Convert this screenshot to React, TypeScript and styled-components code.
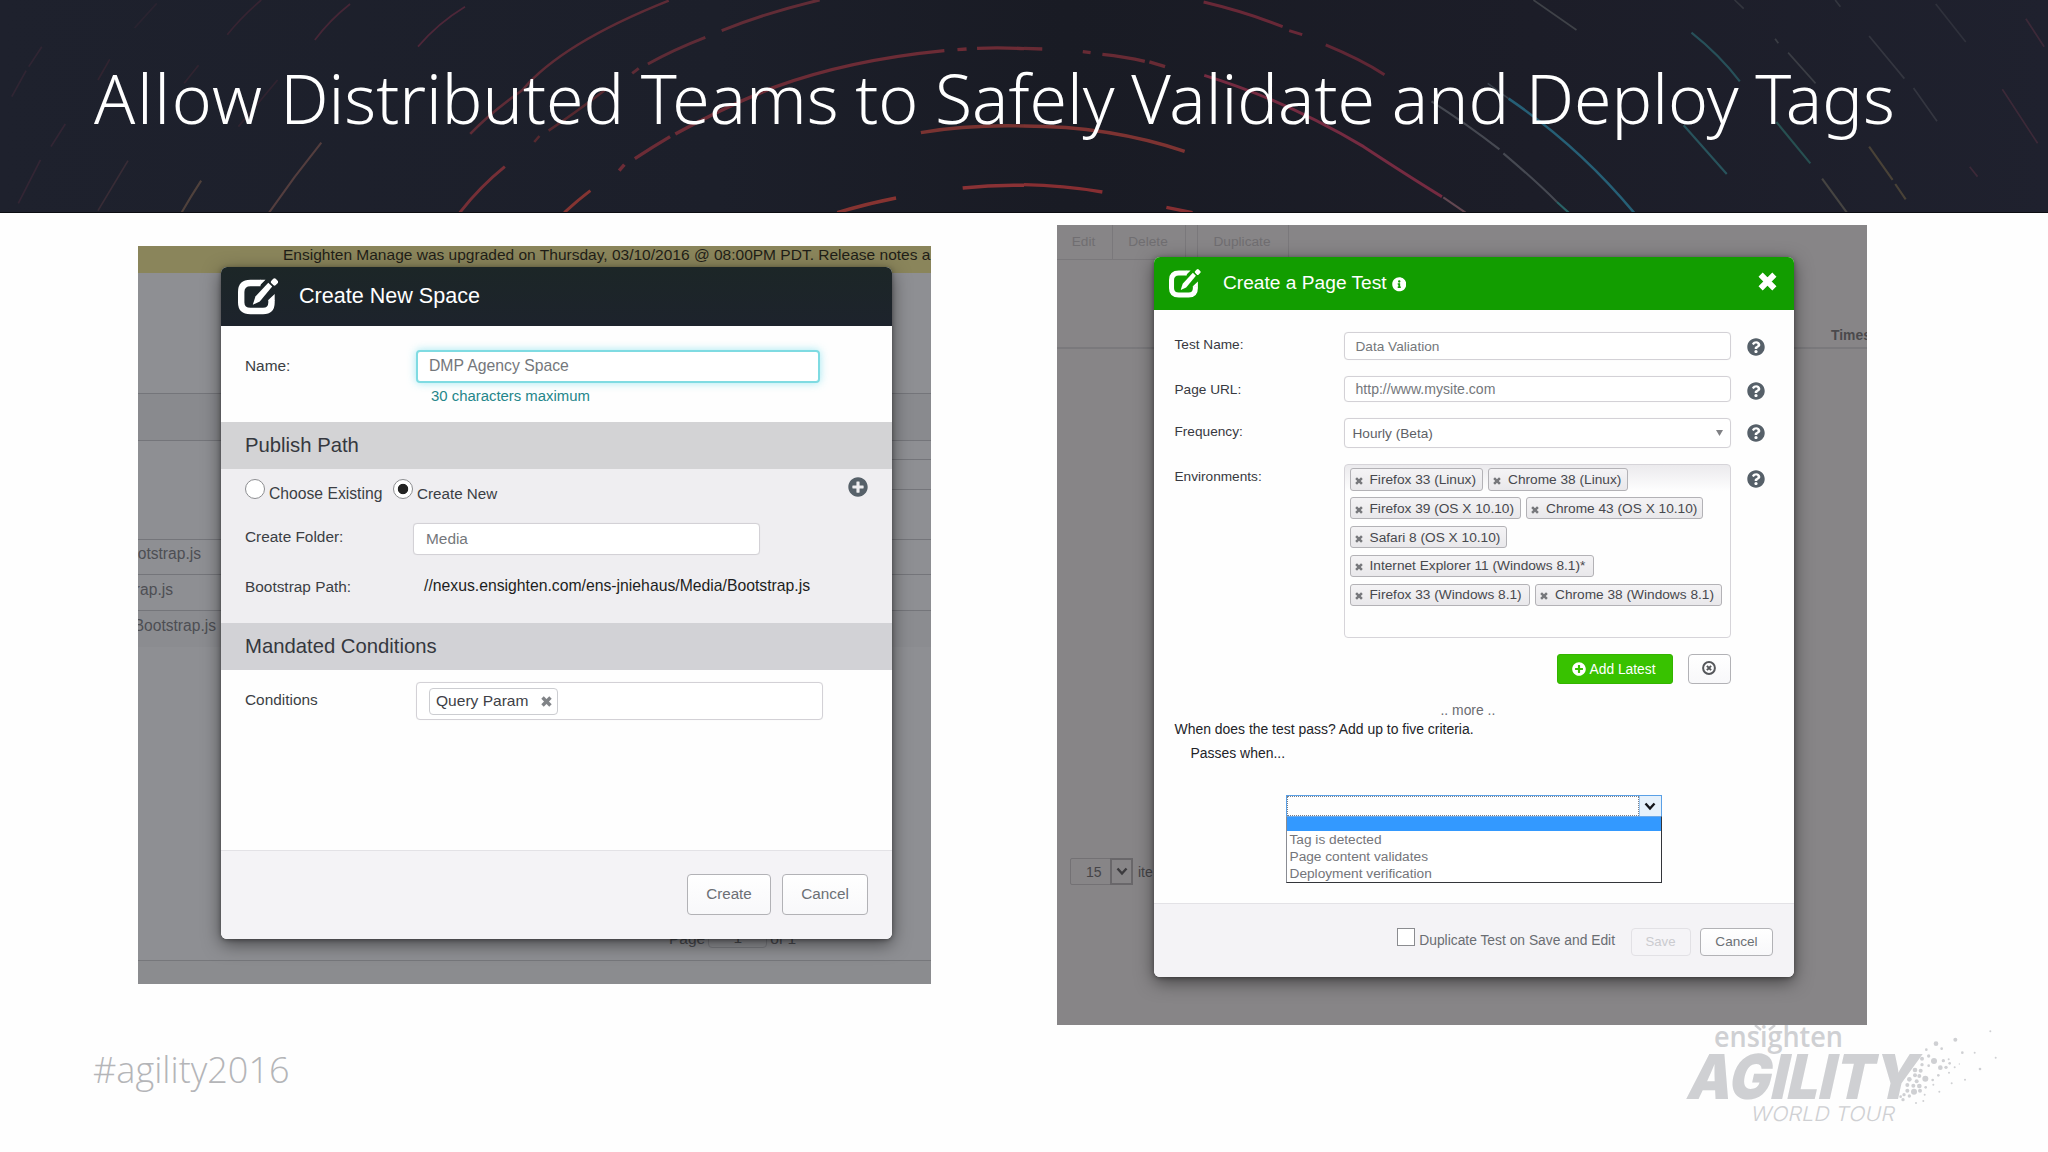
import React from 'react';
import styled, { createGlobalStyle } from 'styled-components';
import { FaPlusCircle, FaQuestionCircle, FaInfoCircle } from 'react-icons/fa';

const GlobalStyle = createGlobalStyle`
  * { box-sizing: border-box; }
  body { margin: 0; background: #fefefe; }
`;

/* ---------- slide ---------- */

const Slide = styled.div`
  width: 2048px;
  height: 1152px;
  display: flex;
  flex-direction: column;
  overflow: hidden;
  background: #fefefe;
  font-family: 'Liberation Sans', Arial, sans-serif;
`;

const Banner = styled.header`
  position: relative;
  flex: none;
  height: 213px;
  padding: 50px 0 0 94px;
  background: linear-gradient(90deg, #1e212d 0%, #1c1f2a 35%, #191b24 52%, #1c1d28 75%, #1f212e 100%);
  border-bottom: 1px solid #0c0d12;
`;

const Trails = styled.svg`
  position: absolute;
  inset: 0;
  width: 2048px;
  height: 212px;
  fill: none;
`;

const Title = styled.h1`
  position: relative;
  margin: 0;
  font: 300 67.9px/96px 'Noto Sans', sans-serif;
  word-spacing: -1px;
  color: #fff;
  white-space: nowrap;
`;

const Loose = styled.span`
  letter-spacing: 1.6px;
`;

const Stage = styled.main`
  flex: none;
  height: 812px;
  display: flex;
  align-items: flex-start;
  padding-left: 138px;
  gap: 126px;
`;

const SlideFooter = styled.footer`
  flex: 1;
  display: flex;
  justify-content: space-between;
  padding: 0 48px 0 93px;
`;

const Hashtag = styled.div`
  margin-top: 19px;
  font: 300 36.1px/50px 'Open Sans', sans-serif;
  color: #b4b5b8;
`;

/* ---------- captured windows ---------- */

const Shot = styled.section<{ $w: number; $h: number; $top: number; $bg: string }>`
  position: relative;
  flex: none;
  display: flex;
  flex-direction: column;
  width: ${p => p.$w}px;
  height: ${p => p.$h}px;
  margin-top: ${p => p.$top}px;
  background: ${p => p.$bg};
  overflow: hidden;
`;

const Notice = styled.div`
  flex: none;
  height: 27px;
  padding-left: 145px;
  background: #8a855b;
  color: #1f1e17;
  font-size: 15.53px;
  line-height: 17px;
  white-space: nowrap;
`;

const Strip = styled.div<{ $h: number; $bg?: string; $inset?: number; $plain?: boolean }>`
  flex: none;
  display: flex;
  align-items: center;
  height: ${p => p.$h}px;
  margin-left: ${p => p.$inset || 0}px;
  background: ${p => p.$bg || 'transparent'};
  border-bottom: ${p => (p.$plain ? 'none' : '1px solid #74757a')};
`;

const ScriptName = styled.span<{ $w: number }>`
  display: flex;
  justify-content: flex-end;
  width: ${p => p.$w}px;
  padding-bottom: 6px;
  font-size: 15.6px;
  color: #4d4e53;
`;

const Pager = styled.div`
  flex: none;
  display: flex;
  align-items: flex-end;
  height: 30px;
  padding: 0 0 12px 531px;
  gap: 3px;
  border-bottom: 1px solid #76777b;
  font-size: 15.5px;
  line-height: 18px;
  color: #4a4b50;
`;

const PagerBox = styled.span`
  width: 59px;
  height: 27px;
  padding-top: 7px;
  border: 1px solid #7a7b80;
  border-radius: 4px;
  text-align: center;
`;

const Fill = styled.div`
  flex: 1;
`;

const Toolbar = styled.div`
  flex: none;
  display: flex;
  height: 35px;
`;

const Tool = styled.span<{ $w: number }>`
  width: ${p => p.$w}px;
  height: 35px;
  padding-right: 2px;
  border-right: 1px solid #7a787b;
  border-bottom: 1px solid #7a787b;
  text-align: center;
  font-size: 13.7px;
  line-height: 34px;
  color: #706e71;
`;

const ListHead = styled.div`
  flex: none;
  display: flex;
  justify-content: flex-end;
  height: 89px;
  padding-top: 66px;
  border-bottom: 2px solid #7a797c;
`;

const ListHeadCell = styled.span`
  width: 36px;
  font: bold 13.9px/18px 'Liberation Sans', Arial, sans-serif;
  color: #4a494c;
`;

const PageSize = styled.div`
  flex: none;
  display: flex;
  align-items: center;
  height: 27px;
  margin: 509px 0 0 13px;
  font-size: 14px;
  color: #454447;
`;

const PageSizeBox = styled.span`
  display: flex;
  width: 63px;
  height: 27px;
  margin-right: 5px;
  border: 1px solid #737174;
  border-radius: 2px;
`;

const PageSizeValue = styled.span`
  flex: 1;
  padding-left: 15px;
  line-height: 26px;
`;

const PageSizeArrow = styled.span`
  display: flex;
  align-items: center;
  justify-content: center;
  width: 23px;
  margin: -1px;
  border: 2px solid #69676a;
`;

/* ---------- dialogs ---------- */

const Dialog = styled.div<{ $x: number; $y: number; $w: number; $h: number }>`
  position: absolute;
  left: ${p => p.$x}px;
  top: ${p => p.$y}px;
  width: ${p => p.$w}px;
  height: ${p => p.$h}px;
  display: flex;
  flex-direction: column;
  border-radius: 6px;
  background: #fefefe;
  overflow: hidden;
`;

const DialogShadow = styled.div<{ $x: number; $y: number; $w: number; $h: number }>`
  position: absolute;
  left: ${p => p.$x}px;
  top: ${p => p.$y}px;
  width: ${p => p.$w}px;
  height: ${p => p.$h}px;
  border-radius: 6px;
  box-shadow: 0 5px 18px rgba(0, 0, 0, 0.5), 0 1px 4px rgba(0, 0, 0, 0.35);
`;

const DialogHead = styled.div<{ $h: number; $bg: string; $size: number }>`
  flex: none;
  display: flex;
  align-items: center;
  height: ${p => p.$h}px;
  background: ${p => p.$bg};
  color: #fff;
  font-size: ${p => p.$size}px;
  svg { flex: none; }
`;

const DialogTitle = styled.span<{ $gap: number }>`
  margin-left: ${p => p.$gap}px;
  white-space: nowrap;
`;

const Block = styled.div<{ $h: number; $top?: number; $bg?: string }>`
  flex: none;
  height: ${p => p.$h}px;
  padding: ${p => p.$top || 0}px 24px 0 24px;
  background: ${p => p.$bg || 'transparent'};
  color: #3b3e44;
  font-size: 15.4px;
`;

const SectionBar = styled.div<{ $bg: string }>`
  flex: none;
  height: 47px;
  padding-left: 24px;
  background: ${p => p.$bg};
  font-size: 20.3px;
  line-height: 47px;
  color: #35383e;
`;

const Row = styled.div<{ $h: number; $mt?: number }>`
  display: flex;
  align-items: center;
  height: ${p => p.$h}px;
  margin-top: ${p => p.$mt || 0}px;
  white-space: nowrap;
`;

const Label = styled.label<{ $w: number; $lift?: number }>`
  flex: none;
  width: ${p => p.$w}px;
  padding-bottom: ${p => p.$lift || 0}px;
`;

const Field = styled.div<{ $w: number; $h: number; $pad?: number; $focus?: boolean; $color?: string; $size?: number }>`
  flex: none;
  display: flex;
  align-items: center;
  justify-content: space-between;
  width: ${p => p.$w}px;
  height: ${p => p.$h}px;
  padding: 0 ${p => p.$pad ?? 11}px;
  border: ${p => (p.$focus ? '2px solid #7fdbe2' : '1px solid #d3d1d6')};
  border-radius: 4px;
  background: #fff;
  color: ${p => p.$color || '#74777b'};
  font-size: ${p => (p.$size ? `${p.$size}px` : 'inherit')};
  box-shadow: ${p => (p.$focus ? '0 0 9px rgba(110, 220, 235, 0.65)' : '0 0 1px rgba(0,0,0,.08)')};
`;

const Hint = styled.div`
  padding-left: 186px;
  font-size: 14.9px;
  line-height: 26px;
  color: #24868a;
`;

const RadioRow = styled.div`
  display: flex;
  align-items: flex-start;
  height: 54px;
  padding-top: 10px;
  white-space: nowrap;
  svg { margin: -2px 0 0 auto; }
`;

const Radio = styled.span<{ $on?: boolean }>`
  flex: none;
  width: 20px;
  height: 20px;
  border: 1.5px solid #8c8d90;
  border-radius: 50%;
  background: ${p => (p.$on ? 'radial-gradient(circle, #222 0 4.8px, #fff 5.6px)' : '#fff')};
`;

const RadioText = styled.span<{ $w: number; $size: number }>`
  width: ${p => p.$w}px;
  padding: 4px 0 0 4px;
  line-height: 21px;
  font-size: ${p => p.$size}px;
`;

const PathText = styled.span`
  padding: 0 0 3px 8px;
  font-size: 15.75px;
  color: #1d1e21;
`;

const Chip = styled.span`
  display: flex;
  align-items: center;
  justify-content: space-between;
  width: 129px;
  height: 27px;
  padding: 0 5px 0 6px;
  border: 1.5px solid #cccdd1;
  border-radius: 4px;
  font-size: 15.56px;
  color: #3d4046;
`;

const DialogFoot = styled.div<{ $pad: string; $gap: number }>`
  flex: 1;
  display: flex;
  justify-content: flex-end;
  align-items: flex-start;
  gap: ${p => p.$gap}px;
  padding: ${p => p.$pad};
  border-top: 1px solid #e3e2e6;
  background: #f4f3f6;
`;

const Button = styled.button<{ $w: number; $h: number; $size: number; $off?: boolean }>`
  display: flex;
  align-items: center;
  justify-content: center;
  width: ${p => p.$w}px;
  height: ${p => p.$h}px;
  padding: 0 0 2px;
  border: 1.5px solid ${p => (p.$off ? '#e2e1e5' : '#b2b2b6')};
  border-radius: 4px;
  background: ${p => (p.$off ? '#f5f4f7' : 'linear-gradient(#fff, #f8f8fa)')};
  color: ${p => (p.$off ? '#cbcbcf' : '#6c7075')};
  font: ${p => p.$size}px 'Liberation Sans', Arial, sans-serif;
`;

/* ---------- page test dialog ---------- */

const TestForm = styled.div`
  flex: none;
  height: 593px;
  padding: 22px 0 0 21px;
  font-size: 13.65px;
  color: #38393f;
`;

const Help = styled(FaQuestionCircle)<{ $y?: number }>`
  flex: none;
  width: 18px;
  height: 18px;
  margin-left: 16px;
  margin-top: ${p => p.$y || 0}px;
  color: #566069;
`;

const Environments = styled.div`
  display: flex;
  align-items: flex-start;
  height: 174px;
  margin-top: 16px;
`;

const EnvLabel = styled.label`
  flex: none;
  width: 169px;
  padding-top: 5px;
`;

const EnvBox = styled.div`
  display: flex;
  flex-wrap: wrap;
  align-content: flex-start;
  gap: 6.4px 5.5px;
  width: 387px;
  height: 174px;
  padding: 3px 0 0 5px;
  border: 1px solid #d6d4d9;
  border-radius: 4px;
  background: linear-gradient(#ebeaed 0, #fefefe 26px);
`;

const Tag = styled.span<{ $w: number }>`
  display: flex;
  align-items: center;
  width: ${p => p.$w}px;
  height: 22.5px;
  padding-left: 4px;
  border: 1.5px solid #b3b2b6;
  border-radius: 3px;
  background: linear-gradient(#f4f3f5, #e9e8eb);
  color: #47484d;
  font-size: 13.7px;
  white-space: nowrap;
  svg { flex: none; margin: 3px 7px 0 0; }
`;

const Actions = styled.div`
  display: flex;
  justify-content: flex-end;
  gap: 15px;
  width: 556px;
  height: 30px;
  margin-top: 16px;
`;

const AddButton = styled.button`
  display: flex;
  align-items: center;
  justify-content: center;
  gap: 4px;
  width: 116px;
  height: 30px;
  padding: 0 2px 0 0;
  border: 1px solid #34b400;
  border-radius: 3px;
  background: #38c200;
  color: #fff;
  font: 13.8px 'Liberation Sans', Arial, sans-serif;
`;

const More = styled.div`
  margin-top: 17px;
  padding-left: 266px;
  font-size: 13.9px;
  line-height: 19px;
  color: #6b6c71;
`;

const Question = styled.div<{ $indent?: number; $mt?: number }>`
  margin-top: ${p => p.$mt || 0}px;
  padding-left: ${p => p.$indent || 0}px;
  font-size: 13.95px;
  line-height: 19px;
  color: #222328;
`;

const Criteria = styled.div`
  width: 376px;
  margin: 32px 0 0 111px;
`;

const Combo = styled.div`
  display: flex;
  height: 21px;
  border: 1.5px solid #5aa0e6;
  border-bottom: none;
`;

const ComboText = styled.div`
  flex: 1;
  border: 1px dotted #7c7f86;
  background: #fefefe;
`;

const ComboArrow = styled.div`
  display: flex;
  align-items: center;
  justify-content: center;
  width: 22px;
  border-left: 1px solid #9cc6ef;
  background: #e6f1fb;
`;

const Options = styled.div`
  height: 67px;
  border: 1.5px solid #33353a;
  border-top-color: #6aa9ea;
  border-left-color: #8a8c93;
  background: #fff;
  font-size: 13.7px;
  line-height: 17px;
  color: #74757a;
`;

const Option = styled.div<{ $active?: boolean }>`
  height: ${p => (p.$active ? 14 : 17)}px;
  padding-left: 3px;
  background: ${p => (p.$active ? '#3399ff' : 'transparent')};
`;

const CheckLabel = styled.label`
  display: flex;
  align-items: flex-start;
  gap: 4px;
  margin-right: 6px;
  font-size: 13.83px;
  line-height: 25px;
  color: #6a6d72;
`;

const CheckBox = styled.span`
  width: 18px;
  height: 18px;
  border: 1.5px solid #8b8c90;
  background: #fff;
`;

/* ---------- drawings ---------- */

const Icon = styled.svg<{ $m?: string }>`
  flex: none;
  margin: ${p => p.$m || 0};
`;

function ComposeIcon({ width, left }: { width: number; left: number }) {
  return (
    <Icon width={width} height={(width * 37) / 40} viewBox="0 0 40 37" $m={`0 0 0 ${left}px`}>
      <path
        d="M22.5 5H12.5Q3.2 5 3.2 14V24.5Q3.2 33 12.5 33H25Q33.5 33 33.5 24.5V22"
        fill="none"
        stroke="#fff"
        strokeWidth="6.4"
      />
      <path d="M22 1.8H27.5L21 8.2ZM30.3 22.6V22L36.7 16V22.6Z" fill="#fff" />
      <path d="M14.8 26.8L17.4 18.6L30.3 4.8L34.2 8.6L21.8 23.6Z" fill="#fff" />
      <rect x="33.4" y="0.8" width="6.2" height="6.2" rx="1.8" transform="rotate(45 36.5 3.9)" fill="#fff" />
    </Icon>
  );
}

function CrossIcon({ size, color, margin }: { size: number; color: string; margin?: string }) {
  return (
    <Icon width={size} height={size} viewBox="0 0 16 16" $m={margin}>
      <path d="M2.2 2.2L13.8 13.8M13.8 2.2L2.2 13.8" stroke={color} strokeWidth="5" fill="none" />
    </Icon>
  );
}

const RingCross = () => (
  <Icon width="14" height="14" viewBox="0 0 14 14" fill="none" stroke="#55575b">
    <circle cx="7" cy="7" r="5.9" strokeWidth="2" />
    <path d="M4.9 4.9L9.1 9.1M9.1 4.9L4.9 9.1" strokeWidth="2" />
  </Icon>
);

const Chevron = ({ color }: { color: string }) => (
  <svg width="12" height="9" viewBox="0 0 12 9">
    <path d="M1.5 1.5L6 6.5L10.5 1.5" fill="none" stroke={color} strokeWidth="2.4" />
  </svg>
);

type Trail = [string, string, number, number];

const leftTrails: Trail[] = [
  ['M1024 2Q860 130 800 270Q750 340 720 402', '#74303a', 3, 0.85],
  ['M1255 0Q1170 40 1105 92', '#74303a', 3.5, 0.9],
  ['M1080 112Q1030 150 992 192M978 205L968 220', '#74303a', 3.5, 0.85],
  ['M930 265Q880 340 840 392M826 408L818 426', '#7a2f33', 3, 0.7],
  ['M1446 152Q1300 180 1185 262Q1110 320 1034 402M1026 410Q1000 440 972 476M956 494L948 512', '#82303a', 4, 0.9],
  ['M1466 149L1480 147M1496 145Q1532 142 1568 146', '#82303a', 4, 0.9],
  ['M904 572Q885 600 864 638', '#a03a34', 3.5, 0.9],
  ['M773 500Q735 560 704 638', '#93343a', 3.5, 0.85],
  ['M1410 398Q1480 374 1568 378', '#933a35', 4, 0.9],
  ['M1474 564Q1520 554 1568 556', '#a8383a', 4, 0.9],
  ['M1372 594Q1325 612 1282 638', '#a33a34', 4, 0.9],
  ['M712 20Q670 70 640 140', '#6d2c42', 2, 0.7],
  ['M536 12Q505 60 482 120', '#6a2c40', 2, 0.6],
  ['M400 0Q370 50 348 104', '#5c2a3c', 2, 0.45],
  ['M240 10L206 84', '#4c2c3c', 2, 0.3],
  ['M492 428Q450 530 412 638', '#75504a', 2.5, 0.7],
  ['M308 542Q292 590 278 638', '#755a48', 2.5, 0.65],
  ['M196 482Q172 560 150 632', '#5a3a42', 2, 0.5],
  ['M100 372L78 440M62 480L28 610', '#5a2f42', 2, 0.4],
  ['M64 140L44 200M40 212L18 290', '#5a2f42', 2, 0.35],
  ['M168 178L150 240M304 196L282 250M425 240L365 380', '#5c2c3a', 2, 0.35],
];

const rightTrails: Trail[] = [
  ['M275 6Q340 36 396 80M406 92L426 104', '#7d2c3c', 3.5, 0.9],
  ['M462 135Q515 178 552 224', '#7d2c3c', 3.5, 0.8],
  ['M0 145L28 147M90 155L102 158M120 163Q155 170 185 184M192 186L216 200', '#82303a', 4, 0.85],
  ['M276 226Q400 300 520 440Q590 530 640 590', '#93304a', 3.5, 0.85],
  ['M642 592L676 638', '#7a5660', 2.5, 0.85],
  ['M0 378Q130 378 246 454', '#983a36', 4, 0.9],
  ['M0 554Q60 556 120 576', '#a33436', 4, 0.9],
  ['M218 622L258 638', '#a33436', 4, 0.9],
  ['M780 0L846 90', '#55595c', 2, 0.7],
  ['M1088 0L1102 26M1242 0L1250 20', '#55595c', 2, 0.45],
  ['M624 304Q680 375 728 448', '#5c6068', 2.5, 0.75],
  ['M734 460Q785 545 816 606', '#5c6068', 2.5, 0.75],
  ['M816 606L834 638', '#2f7f80', 2.5, 0.8],
  ['M710 250L742 296', '#4a5560', 2, 0.75],
  ['M742 296Q850 440 934 638', '#2a7690', 3, 0.85],
  ['M1022 98Q1065 165 1096 244', '#2d6a72', 2.5, 0.75],
  ['M1010 376L1076 522', '#2d6a72', 2.5, 0.8],
  ['M1150 116L1155 130M1170 158L1212 250', '#55595c', 2, 0.6],
  ['M1152 366L1204 490', '#2d6a66', 2.5, 0.75],
  ['M1222 536L1260 638', '#5f5b50', 2.5, 0.7],
  ['M1294 108L1348 236M1362 264L1398 364', '#45474f', 2, 0.65],
  ['M1294 440L1330 540M1334 552L1350 598', '#6a5c40', 2.5, 0.65],
  ['M1396 12L1442 126', '#45474f', 2, 0.5],
  ['M1534 56L1562 140M1498 268L1552 430M1448 500L1460 530', '#5c3344', 2, 0.55],
];

function TrailGroup({ trails, x }: { trails: Trail[]; x: number }) {
  return (
    <g transform={`translate(${x} 0) scale(0.6531 0.3333)`}>
      {trails.map(([d, stroke, width, opacity]) => (
        <path key={d} d={d} stroke={stroke} strokeWidth={width * 0.85} opacity={opacity * 0.88} vectorEffect="non-scaling-stroke" />
      ))}
    </g>
  );
}

const dots: [number, number, number][] = [
  [991, 94, 3], [886, 119, 6], [828, 131, 7], [799, 149, 4], [845, 146, 4], [907, 158, 4], [944, 158, 3],
  [1007, 173, 3], [786, 176, 6], [806, 168, 5], [822, 183, 9], [850, 182, 5], [866, 178, 3], [869, 190, 4],
  [960, 207, 4], [786, 194, 5], [806, 197, 4], [841, 203, 7], [858, 202, 5], [884, 202, 3], [898, 192, 2],
  [765, 210, 7], [782, 212, 6], [778, 228, 6], [796, 236, 9], [818, 240, 4], [835, 226, 4], [867, 218, 3],
  [915, 239, 3], [875, 250, 3], [748, 238, 7], [765, 226, 6], [770, 244, 6], [742, 255, 6], [760, 257, 6],
  [778, 258, 7], [797, 262, 4], [820, 254, 3], [742, 272, 6], [762, 275, 9], [780, 272, 6], [838, 275, 3],
  [748, 288, 5], [732, 284, 5], [729, 299, 5], [794, 284, 3], [768, 309, 3], [790, 303, 3], [722, 290, 4],
];

function AgilityLogo() {
  return (
    <svg width="340" height="127" viewBox="1660 1025 340 127" fill="#cfd0d3">
      <text x="1714" y="1046.5" fontFamily="'Open Sans', sans-serif" fontSize="28.5" fontWeight="600" textLength="129" lengthAdjust="spacingAndGlyphs">
        ensighten
      </text>
      <path d="M1755 1025L1761 1030M1775 1025L1769 1030" stroke="#cfd0d3" strokeWidth="2.4" />
      <text transform="translate(1685 1099) skewX(-12.5)" fontFamily="Inter, sans-serif" fontSize="62" fontWeight="900" textLength="229" lengthAdjust="spacingAndGlyphs">
        AGILITY
      </text>
      <text transform="translate(1750 1120.7) skewX(-12.5)" fontFamily="Inter, sans-serif" fontSize="20.2" fontWeight="300" textLength="144" lengthAdjust="spacingAndGlyphs">
        WORLD TOUR
      </text>
      {dots.map(([x, y, r]) => (
        <circle key={`${x}-${y}`} cx={1660 + x / 3} cy={1000 + y / 3} r={r / 3} />
      ))}
    </svg>
  );
}

/* ---------- content ---------- */

const environments: [string, number][] = [
  ['Firefox 33 (Linux)', 133],
  ['Chrome 38 (Linux)', 140],
  ['Firefox 39 (OS X 10.10)', 171],
  ['Chrome 43 (OS X 10.10)', 177],
  ['Safari 8 (OS X 10.10)', 157],
  ['Internet Explorer 11 (Windows 8.1)*', 244.5],
  ['Firefox 33 (Windows 8.1)', 180],
  ['Chrome 38 (Windows 8.1)', 187],
];

function NewSpaceShot() {
  const frame = { $x: 83, $y: 20.5, $w: 671, $h: 672.5 };
  return (
    <Shot $w={793} $h={738} $top={33} $bg="#8e8f93">
      <Notice>Ensighten Manage was upgraded on Thursday, 03/10/2016 @ 08:00PM PDT. Release notes a</Notice>
      <Strip $h={121} />
      <Strip $h={47} $bg="#898a8e" />
      <Strip $h={19} $inset={300} />
      <Strip $h={30} $inset={300} />
      <Strip $h={50} />
      <Strip $h={35}><ScriptName $w={63}>otstrap.js</ScriptName></Strip>
      <Strip $h={36}><ScriptName $w={35}>rap.js</ScriptName></Strip>
      <Strip $h={36} $bg="#8b8c90" $plain><ScriptName $w={78}>Bootstrap.js</ScriptName></Strip>
      <Fill />
      <Pager>
        Page <PagerBox>1</PagerBox> of 1
      </Pager>
      <Strip $h={23} $plain $bg="#8b8c8f" />
      <DialogShadow {...frame} />
      <Dialog {...frame}>
        <DialogHead $h={59.5} $bg="linear-gradient(#1c2627, #1d232c)" $size={21.57}>
          <ComposeIcon width={40} left={17} />
          <DialogTitle $gap={21}>Create New Space</DialogTitle>
        </DialogHead>
        <Block $h={96} $top={23.5}>
          <Row $h={33}>
            <Label $w={171} $lift={1}>Name:</Label>
            <Field $w={404} $h={33} $focus $size={15.76}>DMP Agency Space</Field>
          </Row>
          <Hint>30 characters maximum</Hint>
        </Block>
        <SectionBar $bg="#d3d3d5">Publish Path</SectionBar>
        <Block $h={154} $bg="#efeef1">
          <RadioRow>
            <Radio />
            <RadioText $w={128} $size={15.7}>Choose Existing</RadioText>
            <Radio $on />
            <RadioText $w={121} $size={15.2}>Create New</RadioText>
            <FaPlusCircle size={20} color="#566069" />
          </RadioRow>
          <Row $h={32}>
            <Label $w={168} $lift={5}>Create Folder:</Label>
            <Field $w={347} $h={32} $pad={12}>Media</Field>
          </Row>
          <Row $h={30} $mt={17}>
            <Label $w={171}>Bootstrap Path:</Label>
            <PathText>//nexus.ensighten.com/ens-jniehaus/Media/Bootstrap.js</PathText>
          </Row>
        </Block>
        <SectionBar $bg="#d2d2d6">Mandated Conditions</SectionBar>
        <Block $h={180} $top={12}>
          <Row $h={38}>
            <Label $w={171} $lift={3}>Conditions</Label>
            <Field $w={407} $h={38} $pad={12}>
              <Chip>
                Query Param <CrossIcon size={11} color="#808387" />
              </Chip>
            </Field>
          </Row>
        </Block>
        <DialogFoot $pad="23px 24px 0" $gap={11}>
          <Button $w={84} $h={41} $size={15.2}>Create</Button>
          <Button $w={86} $h={41} $size={15.3}>Cancel</Button>
        </DialogFoot>
      </Dialog>
    </Shot>
  );
}

function PageTestShot() {
  const frame = { $x: 96.5, $y: 31.5, $w: 640.5, $h: 720.5 };
  return (
    <Shot $w={810} $h={800} $top={12} $bg="#878587">
      <Toolbar>
        <Tool $w={56}>Edit</Tool>
        <Tool $w={73}>Delete</Tool>
        <Tool $w={12} />
        <Tool $w={91}>Duplicate</Tool>
      </Toolbar>
      <ListHead>
        <ListHeadCell>Times</ListHeadCell>
      </ListHead>
      <PageSize>
        <PageSizeBox>
          <PageSizeValue>15</PageSizeValue>
          <PageSizeArrow><Chevron color="#3c3b3e" /></PageSizeArrow>
        </PageSizeBox>
        ite
      </PageSize>
      <DialogShadow {...frame} />
      <Dialog {...frame}>
        <DialogHead $h={53.5} $bg="#129d00" $size={19.16}>
          <ComposeIcon width={31.5} left={15.5} />
          <DialogTitle $gap={22.5}>Create a Page Test</DialogTitle>
          <FaInfoCircle size={14.5} style={{ margin: '2px 0 0 5px' }} />
          <CrossIcon size={19} color="#fff" margin="-3px 17px 0 auto" />
        </DialogHead>
        <TestForm>
          <Row $h={28}>
            <Label $w={169} $lift={3}>Test Name:</Label>
            <Field $w={387} $h={28}>Data Valiation</Field>
            <Help $y={1} />
          </Row>
          <Row $h={26} $mt={16}>
            <Label $w={169}>Page URL:</Label>
            <Field $w={387} $h={26} $size={14.07}>http://www.mysite.com</Field>
            <Help $y={4} />
          </Row>
          <Row $h={30} $mt={16}>
            <Label $w={169} $lift={3}>Frequency:</Label>
            <Field $w={387} $h={30} $pad={8} $color="#5e6166">
              Hourly (Beta)
              <Icon width="7" height="6" viewBox="0 0 7 6" $m="0 -1px 0 0">
                <path d="M0 0H7L3.5 6Z" fill="#808185" />
              </Icon>
            </Field>
            <Help />
          </Row>
          <Environments>
            <EnvLabel>Environments:</EnvLabel>
            <EnvBox>
              {environments.map(([name, width]) => (
                <Tag key={name} $w={width}>
                  <CrossIcon size={8} color="#77787c" />
                  {name}
                </Tag>
              ))}
            </EnvBox>
            <Help $y={6} />
          </Environments>
          <Actions>
            <AddButton>
              <FaPlusCircle size={14} />
              Add Latest
            </AddButton>
            <Button $w={43} $h={30} $size={14}>
              <RingCross />
            </Button>
          </Actions>
          <More>.. more ..</More>
          <Question>When does the test pass? Add up to five criteria.</Question>
          <Question $indent={16} $mt={5}>Passes when...</Question>
          <Criteria>
            <Combo>
              <ComboText />
              <ComboArrow><Chevron color="#15161a" /></ComboArrow>
            </Combo>
            <Options>
              <Option $active />
              <Option>Tag is detected</Option>
              <Option>Page content validates</Option>
              <Option>Deployment verification</Option>
            </Options>
          </Criteria>
        </TestForm>
        <DialogFoot $pad="24px 21px 0 0" $gap={9.5}>
          <CheckLabel>
            <CheckBox />
            Duplicate Test on Save and Edit
          </CheckLabel>
          <Button $w={60} $h={28} $size={13.2} $off>Save</Button>
          <Button $w={73} $h={28} $size={13.6}>Cancel</Button>
        </DialogFoot>
      </Dialog>
    </Shot>
  );
}

export default function App() {
  return (
    <Slide>
      <GlobalStyle />
      <Banner>
        <Trails viewBox="0 0 2048 212">
          <TrailGroup trails={leftTrails} x={0} />
          <TrailGroup trails={rightTrails} x={1024} />
        </Trails>
        <Title>
          <Loose>Allow</Loose> Distributed Teams to Safely Validate and Deploy Tags
        </Title>
      </Banner>
      <Stage>
        <NewSpaceShot />
        <PageTestShot />
      </Stage>
      <SlideFooter>
        <Hashtag>#agility2016</Hashtag>
        <AgilityLogo />
      </SlideFooter>
    </Slide>
  );
}
